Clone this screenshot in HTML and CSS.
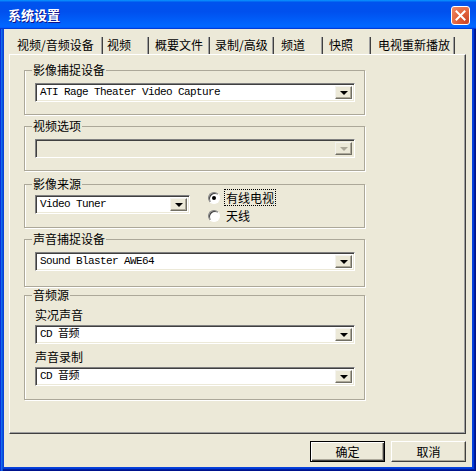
FILE: index.html
```html
<!DOCTYPE html>
<html lang="zh-CN">
<head>
<meta charset="utf-8">
<title>系统设置</title>
<link rel="stylesheet" href="styles.css">
</head>
<body>
<div class="window">
  <div class="titlebar">
    <span class="title">系统设置</span>
    <span class="close" aria-label="关闭">
      <svg width="19" height="19" viewBox="0 0 19 19"><path d="M5.5 5.5 L13.5 13.5 M13.5 5.5 L5.5 13.5" stroke="#fff" stroke-width="2" stroke-linecap="square"/></svg>
    </span>
  </div>
  <div class="client">
    <div class="tabs">
      <div class="tab t1 active">视频/音频设备</div>
      <div class="tab t2">视频</div>
      <div class="tab t3">概要文件</div>
      <div class="tab t4">录制/高级</div>
      <div class="tab t5">频道</div>
      <div class="tab t6">快照</div>
      <div class="tab t7">电视重新播放</div>
    </div>
    <div class="panel">
      <fieldset class="group g1">
        <legend>影像捕捉设备</legend>
        <div class="combo"><span class="value">ATI Rage Theater Video Capture</span><span class="drop"><i class="arrow"></i></span></div>
      </fieldset>
      <fieldset class="group g2">
        <legend>视频选项</legend>
        <div class="combo disabled"><span class="value"></span><span class="drop"><i class="arrow"></i></span></div>
      </fieldset>
      <fieldset class="group g3">
        <legend>影像来源</legend>
        <div class="source-row">
          <div class="combo short"><span class="value">Video Tuner</span><span class="drop"><i class="arrow"></i></span></div>
          <div class="radios">
            <div class="radio checked"><span class="dot"></span><span class="rlabel focus">有线电视</span></div>
            <div class="radio"><span class="dot"></span><span class="rlabel">天线</span></div>
          </div>
        </div>
      </fieldset>
      <fieldset class="group g4">
        <legend>声音捕捉设备</legend>
        <div class="combo"><span class="value">Sound Blaster AWE64</span><span class="drop"><i class="arrow"></i></span></div>
      </fieldset>
      <fieldset class="group g5">
        <legend>音频源</legend>
        <div class="field-label first">实况声音</div>
        <div class="combo"><span class="value">CD 音频</span><span class="drop"><i class="arrow"></i></span></div>
        <div class="field-label">声音录制</div>
        <div class="combo"><span class="value">CD 音频</span><span class="drop"><i class="arrow"></i></span></div>
      </fieldset>
    </div>
    <div class="buttons">
      <button class="btn default">确定</button>
      <button class="btn">取消</button>
    </div>
  </div>
</div>
</body>
</html>
```

FILE: styles.css
```css
* { box-sizing: border-box; }
html, body { margin: 0; padding: 0; }
body {
  width: 476px;
  height: 471px;
  overflow: hidden;
  font-family: "Noto Sans CJK SC", "Liberation Sans", sans-serif;
  font-size: 12px;
  color: #000;
  background: #0054E3;
}
.window {
  width: 476px;
  height: 471px;
  display: flex;
  flex-direction: column;
  background: #0842DA;
  box-shadow: inset 1px 0 #0831D9, inset 2px 0 #166AEE, inset 3px 0 #0855DD,
              inset -1px -1px #00138C, inset -2px -2px #001EA0, inset -3px -3px #003BDA;
}
.titlebar {
  height: 29px;
  flex: none;
  display: flex;
  align-items: center;
  justify-content: space-between;
  padding: 0 6px 0 8px;
  background: linear-gradient(180deg, #0997FF 0, #0053EE 8%, #0050EE 40%, #0066FF 88%, #0066FF 93%, #005BFF 95%, #003DD7 96%, #003DD7 100%);
}
.title {
  color: #fff;
  font-weight: bold;
  font-size: 13px;
  line-height: 14px;
  letter-spacing: 0;
  text-shadow: 1px 1px #0F1089;
}
.close {
  width: 19px;
  height: 19px;
  margin-top: 2px;
  border: 1px solid #fff;
  border-radius: 3px;
  background: radial-gradient(circle at 85% 85%, #CC4628 0, #E0603A 45%, #F08C68 100%);
  display: flex;
  align-items: center;
  justify-content: center;
}
.close svg { display: block; margin: -1px; }
.client {
  flex: 1;
  margin: 0 4px 4px 4px;
  background: #ECE9D8;
  display: flex;
  flex-direction: column;
}
.tabs {
  display: flex;
  height: 25px;
  padding: 8px 0 0 8px;
}
.tab {
  height: 17px;
  line-height: 16px;
  border-right: 1px solid #404040;
  box-shadow: inset -1px 0 #A0A0A0;
  padding-left: 5px;
  white-space: nowrap;
}
.t1 { width: 91px; }
.t2 { width: 46px; padding-left: 4px; }
.t3 { width: 61px; padding-left: 6px; }
.t4 { width: 64px; }
.t5 { width: 49px; padding-left: 7px; }
.t6 { width: 48px; padding-left: 6px; }
.t7 { width: 84px; padding-left: 7px; }
.panel {
  margin: 0 6px 0 5px;
  height: 380px;
  border-top: 1px solid #fff;
  border-left: 1px solid #fff;
  border-right: 1px solid #404040;
  border-bottom: 1px solid #404040;
  box-shadow: inset -1px -1px #A0A0A0;
  padding: 9px 0 0 14px;
  display: flex;
  flex-direction: column;
}
.group {
  width: 341px;
  margin: 0;
  padding: 7px 9px 12px 10px;
  border: 1px solid #ACA899;
  box-shadow: 1px 1px 0 #fff, inset 1px 0 #fff;
  min-inline-size: 0;
}
.group legend {
  padding: 0 1px;
  margin-left: -3px;
  font-size: 12px;
  line-height: 12px;
  height: 12px;
}
.g2 { margin-top: 5px; }
.g3 { margin-top: 7px; padding-top: 0; padding-bottom: 3px; }
.g4 { margin-top: 5px; padding-bottom: 15px; }
.g5 { margin-top: 2px; padding-top: 8px; padding-bottom: 13px; }
.combo {
  height: 19px;
  width: 320px;
  display: flex;
  align-items: stretch;
  background: #fff;
  border-top: 1px solid #808080;
  border-left: 1px solid #808080;
  border-right: 1px solid #fff;
  border-bottom: 1px solid #fff;
  box-shadow: inset 1px 1px #404040, inset -1px -1px #ECE9D8;
  padding: 2px;
}
.combo.short { width: 155px; margin-top: 5px; }
.combo.disabled { background: #ECE9D8; }
.value {
  flex: 1;
  font-family: "Liberation Mono", "Noto Sans CJK SC", monospace;
  font-size: 11px;
  letter-spacing: -0.6px;
  line-height: 13px;
  padding-left: 2px;
  white-space: nowrap;
  overflow: hidden;
}
.drop {
  width: 17px;
  flex: none;
  background: #ECE9D8;
  border-top: 1px solid #F4F3EE;
  border-left: 1px solid #F4F3EE;
  border-right: 1px solid #716F64;
  border-bottom: 1px solid #716F64;
  box-shadow: inset -1px -1px #ACA899;
  display: flex;
  align-items: center;
  justify-content: center;
}
.arrow {
  width: 0;
  height: 0;
  border-left: 4px solid transparent;
  border-right: 4px solid transparent;
  border-top: 4px solid #000;
  margin-top: 1px;
}
.disabled .arrow { border-top-color: #ACA899; }
.source-row {
  display: flex;
  align-items: flex-start;
}
.radios {
  margin-left: 18px;
  margin-top: -1px;
  display: flex;
  flex-direction: column;
  gap: 1px;
}
.radio {
  height: 17px;
  display: flex;
  align-items: center;
}
.dot {
  width: 12px;
  height: 12px;
  border-radius: 50%;
  background: #fff;
  border: 1px solid;
  border-color: #808080 #fff #fff #808080;
  box-shadow: inset 1px 1px #404040;
  display: flex;
  align-items: center;
  justify-content: center;
}
.radio.checked .dot::after {
  content: "";
  width: 4px;
  height: 4px;
  border-radius: 50%;
  background: #000;
}
.rlabel {
  margin-left: 4px;
  line-height: 13px;
  padding: 1px;
  border: 1px dotted transparent;
}
.rlabel.focus { border-color: #000; }
.field-label {
  line-height: 12px;
  margin: 7px 0 4px 0;
}
.field-label.first { margin-top: 0; }
.buttons {
  display: flex;
  justify-content: flex-end;
  gap: 6px;
  margin: 7px 6px 0 0;
}
.btn {
  width: 75px;
  height: 21px;
  padding: 0;
  font-family: "Noto Sans CJK SC", sans-serif;
  font-size: 12px;
  line-height: 12px;
  background: #ECE9D8;
  color: #000;
  border-top: 1px solid #fff;
  border-left: 1px solid #fff;
  border-right: 1px solid #404040;
  border-bottom: 1px solid #404040;
  box-shadow: inset -1px -1px #ACA899;
}
.btn.default {
  border: 1px solid #000;
  box-shadow: inset 1px 1px #fff, inset -1px -1px #404040, inset -2px -2px #ACA899;
}
```
